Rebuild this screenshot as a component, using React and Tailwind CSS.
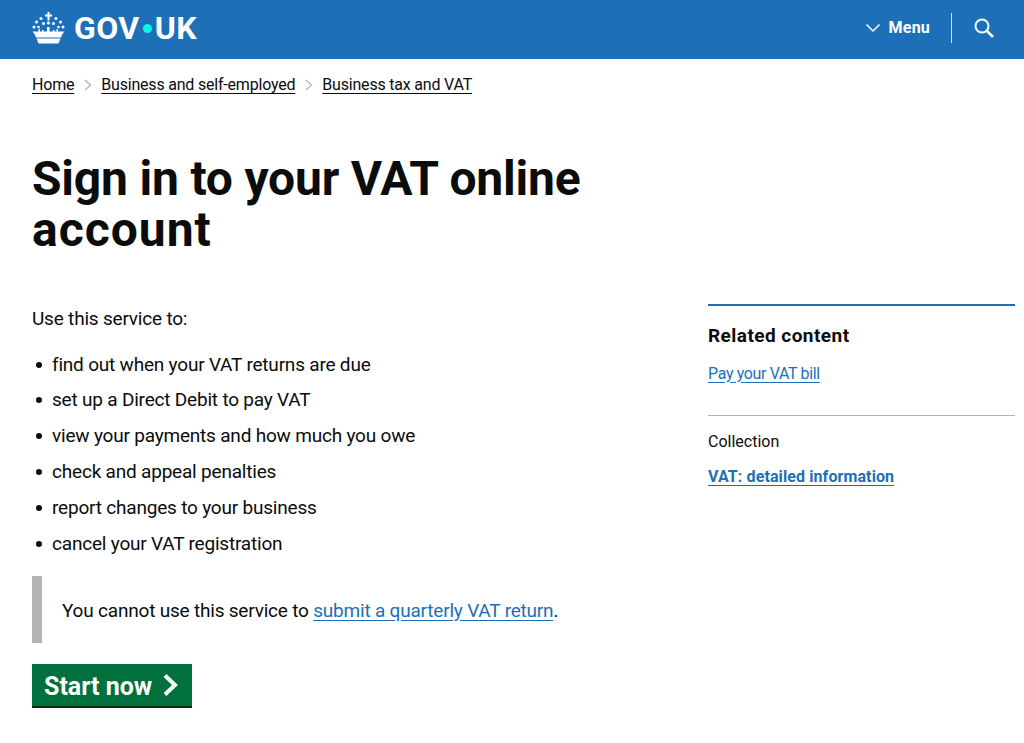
function Crown() {
  return (
    <svg width="33" height="32" viewBox="0 0 33 32" fill="white" aria-hidden="true">
      <path d="M15.500 0h2v2.500h2.500v2h-2.500v4h-2v-4H13v-2h2.500z" />
      <circle cx="16.500" cy="11" r="1.600" />
      <circle cx="9" cy="6.500" r="1.500" />
      <circle cx="24" cy="6.500" r="1.500" />
      <circle cx="4.500" cy="10" r="1.500" />
      <circle cx="28.500" cy="10" r="1.500" />
      <circle cx="11.500" cy="11.500" r="1.500" />
      <circle cx="21.500" cy="11.500" r="1.500" />
      <circle cx="2" cy="15" r="1.500" />
      <circle cx="31" cy="15" r="1.500" />
      <circle cx="6.500" cy="15" r="1.300" />
      <circle cx="26.500" cy="15" r="1.300" />
      <path d="M0.500 19.500h6V17h1.500v2.500h2V18h1.500v1.500h3.500V15h2.500v4.500H21V18h1.500v1.500h2V17H26v2.500h6.500l-2 2.500-1.500 3.500H4l-1.500-3.500z" />
      <path d="M4.500 26.500h24L26.500 31.500h-20z" />
    </svg>
  )
}

const items = [
  'find out when your VAT returns are due',
  'set up a Direct Debit to pay VAT',
  'view your payments and how much you owe',
  'check and appeal penalties',
  'report changes to your business',
  'cancel your VAT registration',
]

export default function App() {
  return (
    <div className="font-['Roboto',sans-serif] text-[#0b0c0c] bg-white min-h-[743px]">
      <header className="h-[59px] bg-[#1d70b8] flex items-center justify-between pl-[32px] pr-[30px] pb-[4px]">
        <div className="flex items-center gap-[9px] text-white">
          <Crown />
          <span className="flex items-center text-[32px] font-bold leading-none tracking-[0.4px]">
            GOV<span className="w-[9px] h-[9px] rounded-full bg-[#00ffe0] mx-[3px] mt-[2px]" />UK
          </span>
        </div>
        <div className="flex items-center text-white">
          <svg width="16" height="10" viewBox="0 0 16 10" fill="none" stroke="white" strokeWidth="1.500"><path d="M1.500 1.500 8 8l6.500-6.500" /></svg>
          <span className="ml-[8px] text-[16px] font-bold tracking-[0.2px]">Menu</span>
          <span className="w-px h-[30px] bg-white/80 ml-[21px] mr-[22px]" />
          <svg width="20" height="20" viewBox="0 0 20 20" fill="none" stroke="white" strokeWidth="2"><circle cx="8" cy="8" r="6.500" /><path d="M13 13l6 6" strokeWidth="2.500" /></svg>
        </div>
      </header>

      <nav className="flex items-center pl-[32px] mt-[15px] text-[16px] leading-[22px] tracking-[-0.2px]">
        <a className="underline underline-offset-[3px]">Home</a>
        <svg className="mx-[9.500px]" width="8" height="12" viewBox="0 0 8 12" fill="none" stroke="#b1b4b6" strokeWidth="1.300"><path d="M1 1l5.500 5L1 11" /></svg>
        <a className="underline underline-offset-[3px]">Business and self-employed</a>
        <svg className="mx-[9.500px]" width="8" height="12" viewBox="0 0 8 12" fill="none" stroke="#b1b4b6" strokeWidth="1.300"><path d="M1 1l5.500 5L1 11" /></svg>
        <a className="underline underline-offset-[3px]">Business tax and VAT</a>
      </nav>

      <main className="pl-[32px] pr-[9px]">
        <h1 className="mt-[57px] w-[600px] text-[48px] font-bold leading-[51px] tracking-[-0.2px]">
          Sign in to your VAT online <span className="tracking-[1px]">account</span>
        </h1>
        <div className="mt-[49px] flex">
          <div className="w-[676px] text-[19px] tracking-[-0.2px]">
            <p className="leading-[26px] pt-[2px]">Use this service to:</p>
            <ul className="mt-[19.500px] flex flex-col gap-[9.900px] leading-[26px]">
              {items.map(t => (
                <li key={t} className="flex items-center">
                  <span className="w-[6px] h-[6px] rounded-full bg-[#0b0c0c] ml-[4px] mr-[10px]" />
                  {t}
                </li>
              ))}
            </ul>
            <div className="mt-[19.500px] h-[67px] w-[600px] border-l-[10px] border-[#b1b4b6] pl-[20px] pt-[2px] flex items-center">
              <p>You cannot use this service to <a className="text-[#1d70b8] underline underline-offset-[3px]">submit a quarterly VAT return</a>.</p>
            </div>
            <a className="mt-[21px] w-[160px] h-[44px] bg-[#00703c] border-b-2 border-[#002d18] text-white text-[25px] font-bold tracking-normal flex items-center pl-[12px]">
              <span className="pt-[2px]">Start now</span>
              <svg className="ml-[10px]" width="18" height="24" viewBox="0 0 18 24" fill="none" stroke="white" strokeWidth="4"><path d="M3 2.500l10 9.500-10 9.500" /></svg>
            </a>
          </div>
          <aside className="w-[307px]">
            <div className="border-t-2 border-[#1d70b8] pt-[16.500px]">
              <h2 className="text-[19px] font-bold leading-[26px] tracking-[0.45px]">Related content</h2>
              <a className="block mt-[14px] text-[16px] leading-[22px] tracking-[-0.35px] text-[#1d70b8] underline underline-offset-[3px]">Pay your VAT bill</a>
            </div>
            <div className="mt-[30px] border-t border-[#b1b4b6] pt-[15px]">
              <p className="text-[16px] leading-[22px]">Collection</p>
              <a className="block mt-[13px] text-[16px] leading-[22px] font-bold tracking-[0.1px] text-[#1d70b8] underline underline-offset-[3px]">VAT: detailed information</a>
            </div>
          </aside>
        </div>
      </main>
    </div>
  )
}
